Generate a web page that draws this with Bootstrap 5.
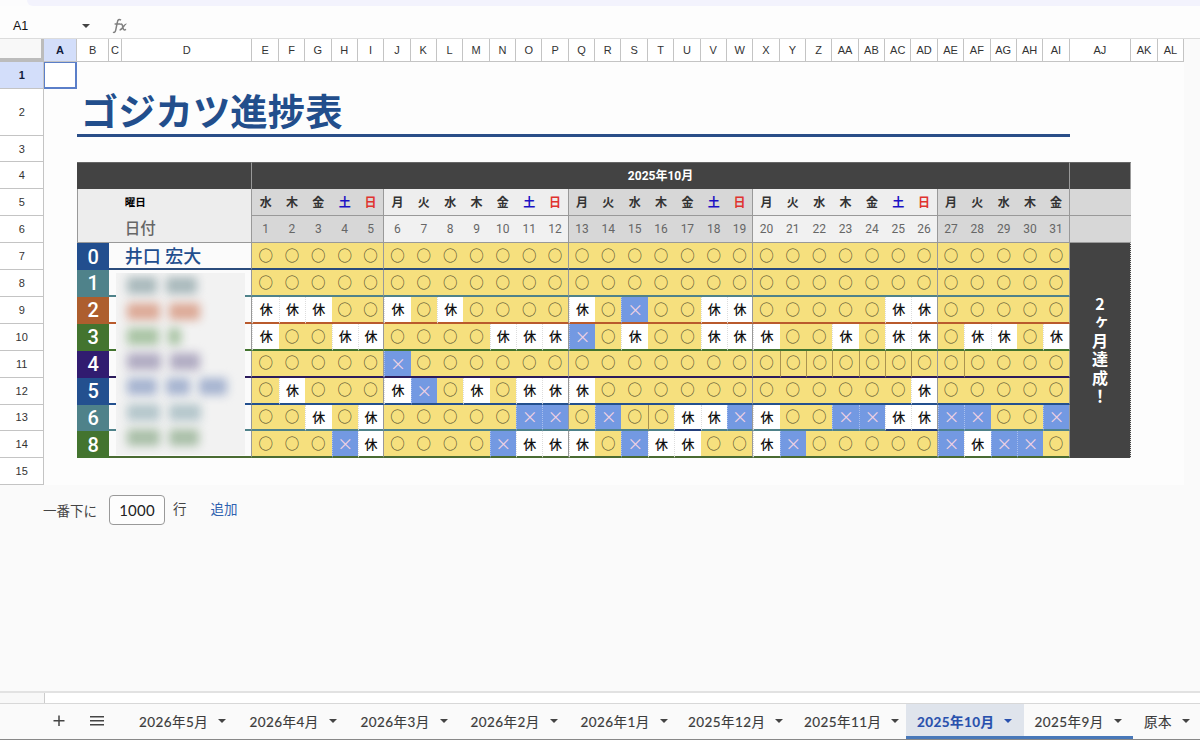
<!DOCTYPE html>
<html lang="ja">
<head>
<meta charset="utf-8">
<meta name="viewport" content="width=device-width, initial-scale=1">
<title>ゴジカツ進捗表</title>
<link rel="stylesheet" href="https://cdn.jsdelivr.net/npm/bootstrap@5.3.0/dist/css/bootstrap.min.css">
<style>
body{height:740px;overflow:hidden;background:#fafafa;font-family:Roboto,"Noto Sans CJK JP",sans-serif;color:#333;line-height:1}
.topstrip{height:6px;background:#f3f3fd;margin-left:27px;border-bottom-left-radius:6px}
.topwrap{background:#fcfcfd}
.fbar{height:33px;background:#fdfdfd;border-bottom:1px solid #dcdcdc;padding-top:7px}
.fbar .ref{width:82px;padding-left:13px;font:12.5px "Liberation Sans",sans-serif;color:#111}
.tri{width:0;height:0;border:4px solid transparent;border-top-color:#444;border-bottom:0}
.sheet{display:grid;width:1184px;background:#fdfdfd;grid-template-columns:44.4px 32.4px 32.6px 12.4px 130.7px repeat(31,26.36px) 61.7px 26.4px 26.4px;grid-template-rows:23.4px 26.8px 46.8px 26.5px repeat(12,26.9px)}
.sheet>div{display:flex;align-items:center;justify-content:center;min-width:0;min-height:0;white-space:nowrap}
.ch{font:11px "Liberation Sans",sans-serif;border-right:1px solid #c4c4c4;border-bottom:1px solid #c4c4c4;background:#fff}
.rh{font:11px "Liberation Sans",sans-serif;border-right:1px solid #c4c4c4;border-bottom:1px solid #c4c4c4;background:#fff}
.picked{background:#d3defa;font-weight:bold;color:#111c3c}
.corner{background:#f8f8f8;border-right:3px solid #bcbcbc;border-bottom:4px solid #bcbcbc}
.cursor{border:1px solid #5b7fc9;border-right-width:2px;border-bottom-width:2px;background:#fff}
.sheet>.heading{justify-content:flex-start;padding:4px 0 0 4px;margin-bottom:-1px;font-size:37.4px;font-weight:700;color:#224e8c;border-bottom:3px solid #2a4e88}
.dark{background:#434343;color:#fff;border-right:1px solid #999;border-top:1px solid #666;font-size:12px;font-weight:700}
.side{background:#ededed;border-right:1px solid #999;border-left:1px solid #999}
.wk{background:#eee;font-size:12px;font-weight:700;border-bottom:1px solid #999;padding-top:1px}
.dt{background:#f1f1f1;font-size:12px;color:#666;border-bottom:1px solid #999}
.alt{background:#d7d7d7}
.sat{color:#1c12c4}.sun{color:#e0332f}
.endwk{border-right:1px solid #999!important}
.num{color:#fff;font-size:20px;font-weight:500}
.mk{border-bottom:2px solid;padding-bottom:1px}
.mk span{line-height:1}
.o{background:#f6e07e;color:#4d492a}
.o span{font:400 14.5px/1 "Noto Sans CJK JP",sans-serif}
.x{background:#7399e2;color:#f0d2e2;border-left:1px dotted #a9bfee}
.x span{font:400 16px/1 "Noto Sans CJK JP",sans-serif}
.k{background:#fff;color:#111;border-left:1px dotted #ddd}
.k span{font:500 13px/1 "Noto Sans CJK JP",sans-serif}
.bl{border-left:1px solid #aa9350}
.nm{background:#fbfbfb;border-bottom:2px solid;border-right:1px solid #999}
.award{background:#434343;color:#fff;border-right:1px dotted #ddd;writing-mode:vertical-rl;text-orientation:upright;font:700 16px/1 "Noto Sans CJK JP",sans-serif;letter-spacing:2.4px}
.veil{z-index:2;position:relative;overflow:hidden;background:#f2f2f2;margin:3px 7px 3px 6.5px;padding-bottom:5px}
.smudge{height:17px;margin-right:9px;filter:blur(5px);border-radius:2px}
.addrow{height:54px;padding-left:43px;padding-bottom:5px;font-size:13.5px;color:#444}
.count{width:56px;height:30px;border:1px solid #999;border-radius:4px;background:#fdfdfd;font:400 15px Lato,sans-serif;letter-spacing:.2px;color:#222;margin:0 8px 0 12px}
.scroll-strip{height:13px;background:#fff;border-top:2px solid #e2e2e2;border-bottom:1px solid #d8d8d8}
.scroll-strip div{width:45px;border-right:1px solid #ccc;background:#f8f8f8}
.tabs{height:36px;background:#fafafa;border-bottom:1px solid #888;color:#3c3c3c;font:400 13.5px Lato,"Noto Sans CJK JP",sans-serif;letter-spacing:.42px}
.tab{height:35px;white-space:nowrap;padding-left:11px;padding-bottom:2px}
.tab span{display:inline-block;-webkit-text-stroke:.15px}
.tab.on{background:#dfe4ec;color:#2850ad;font-weight:700}
.tab.on .tri{border-top-color:#2850ad}
.tab.lined{border-bottom:3px solid #4878b9;padding-top:1px;padding-bottom:0}
</style>
</head>
<body class="d-flex flex-column">
<div class="topwrap"><div class="topstrip"></div></div>
<div class="fbar d-flex align-items-center flex-shrink-0">
  <div class="ref">A1</div><div class="tri"></div>
  <svg style="margin-left:22px" width="16" height="18" viewBox="0 0 16 18" fill="none" stroke="#808080" stroke-width="1.5"><path d="M9 3.2C7 1.8 5.8 2.8 5.4 5L3.7 13.2C3.3 15.3 2.3 15.8 1 15.1M2.6 7H8M8 7.3C10 6.2 10.4 8 10.8 10C11.3 12.8 12 13.7 14 12.4M14.4 7.2C12.5 6.2 10.7 12.8 7.6 13"/></svg>
</div>
<div class="sheet flex-shrink-0" id="sheet"></div>
<div class="addrow d-flex align-items-center flex-shrink-0">
  <span class="pt-1">一番下に</span><div class="count d-flex align-items-center justify-content-center">1000</div><span>行</span><span style="margin-left:24px;color:#2f62b0">追加</span>
</div>
<div class="scroll-strip d-flex mt-auto flex-shrink-0"><div></div></div>
<div class="tabs d-flex align-items-center flex-shrink-0" id="tabs">
  <svg class="flex-shrink-0" style="margin-left:53px" width="12" height="13" stroke="#444" stroke-width="1.5"><path d="M6 .5V11M.5 5.8H11.5"/></svg>
  <svg class="flex-shrink-0" style="margin-left:25px;margin-right:24px" width="14" height="13" stroke="#444" stroke-width="1.5"><path d="M0 1.8H14M0 5.8H14M0 9.8H14"/></svg>
</div>
<script>
const sheet = document.getElementById('sheet');
function put(r, c, cls, html = '', rs = 1, cs = 1, extra = '') {
  sheet.insertAdjacentHTML('beforeend', `<div class="${cls}" style="grid-area:${r}/${c}/span ${rs}/span ${cs};${extra}">${html}</div>`);
}
const colName = i => i < 26 ? String.fromCharCode(65 + i) : 'A' + String.fromCharCode(39 + i);
put(1, 1, 'corner');
for (let i = 0; i < 38; i++) put(1, i + 2, 'ch' + (i ? '' : ' picked'), colName(i));
for (let i = 1; i <= 15; i++) put(i + 1, 1, 'rh' + (i > 1 ? '' : ' picked'), i);
put(2, 2, 'cursor');
put(3, 3, 'heading', 'ゴジカツ進捗表', 1, 34);
put(5, 3, 'dark', '', 1, 3);
put(5, 6, 'dark', '2025年10月', 1, 31);
put(5, 37, 'dark');
put(6, 3, 'side', '', 2, 3, 'border-bottom:1px solid #999');
put(6, 5, 'justify-content-start', '<b style="font-size:10.5px;color:#000;padding-left:3px">曜日</b>');
put(7, 5, 'justify-content-start', '<span style="font-size:15.5px;font-weight:500;color:#666;padding-left:3px">日付</span>');
const days = '月火水木金土日';
for (let d = 1; d <= 31; d++) {
  const w = (d + 1) % 7;
  const alt = d < 6 || (d > 12 && d < 20) || d > 26 ? ' alt' : '';
  const end = w === 6 || d === 31 ? ' endwk' : '';
  put(6, d + 5, 'wk' + alt + end + (w === 5 ? ' sat' : w === 6 ? ' sun' : ''), days[w]);
  put(7, d + 5, 'dt' + alt + end, d);
}
put(6, 37, 'wk alt'); put(7, 37, 'dt alt');
const rows = [
  ['0', '#224e8e', '#2b4c7c', 'ooooooooooooooooooooooooooooooo'],
  ['1', '#4f828a', '#4f828a', 'ooooooooooooooooooooooooooooooo'],
  ['2', '#ad5e2e', '#b95a2c', 'kkkookokooookoxookkoooookkooooo'],
  ['3', '#43742f', '#43742f', 'kookkooookkkxokookkkookokkokkok'],
  ['4', '#311c70', '#2b1b5c', 'oooooxooooooooooooooooooooooooo'],
  ['5', '#23508f', '#23508f', 'okoookxokokkkooooooooooookooooo'],
  ['6', '#4f828a', '#4f828a', 'ookokoooooxxoxookkxkooxxkkxxoox'],
  ['8', '#43742f', '#4a6b32', 'oooxkooooxkkkoxkkookxoooooxkxxo']
];
const glyph = { o: '○', x: '×', k: '休' };
rows.forEach(([n, bg, line, marks], i) => {
  const r = i + 8;
  put(r, 3, 'num', n, 1, 1, `background:${bg}`);
  put(r, 4, 'nm', '', 1, 2, `border-bottom-color:${line}`);
  [...marks].forEach((m, j) => {
    const d = j + 1;
    let cls = 'mk ' + m;
    if (d % 7 === 5 || d === 31) cls += ' endwk';
    if ((i === 4 && d > 20 && d < 29 && d !== 27) || (i === 6 && d === 16)) cls += ' bl';
    const seg = i === 6 && [17, 25, 26].includes(d) ? '#23407c' : line;
    put(r, d + 5, cls, `<span>${glyph[m]}</span>`, 1, 1, `border-bottom-color:${seg}`);
  });
});
put(8, 5, 'justify-content-start', '<span style="font-size:18px;font-weight:500;color:#224e8e;padding-left:3px">井口 宏大</span>');
put(8, 37, 'award', '2ヶ月達成！', 8, 1);
const tints = [['#a9b9bc', 30, 31], ['#dca996', 33, 31], ['#a9c4a4', 32, 13], ['#b0abc2', 34, 30], ['#a6b4d0', 30, 24, 28], ['#b4c6cb', 33, 32], ['#a9bfa8', 33, 30]];
put(9, 4, 'veil flex-column', tints.map(([c, ...ws]) =>
  `<div class="d-flex align-items-center w-100 flex-fill" style="padding-left:11px">${ws.map(w => `<div class="smudge" style="width:${w}px;background:${c}"></div>`).join('')}</div>`).join(''), 7, 2);
[['2026年5月', 110.5], ['2026年4月', 111], ['2026年3月', 110], ['2026年2月', 110], ['2026年1月', 107.5], ['2025年12月', 116], ['2025年11月', 113], ['2025年10月', 117.5, 'on lined'], ['2025年9月', 109.5, 'lined'], ['原本', 70]].forEach(([t, w, c = '']) =>
  document.getElementById('tabs').insertAdjacentHTML('beforeend', `<div class="tab d-flex align-items-center flex-shrink-0 ${c}" style="width:${w}px"><span>${t}</span><div class="tri" style="margin-left:10px"></div></div>`));
</script>
<script src="https://cdn.jsdelivr.net/npm/bootstrap@5.3.0/dist/js/bootstrap.bundle.min.js"></script>
</body>
</html>
